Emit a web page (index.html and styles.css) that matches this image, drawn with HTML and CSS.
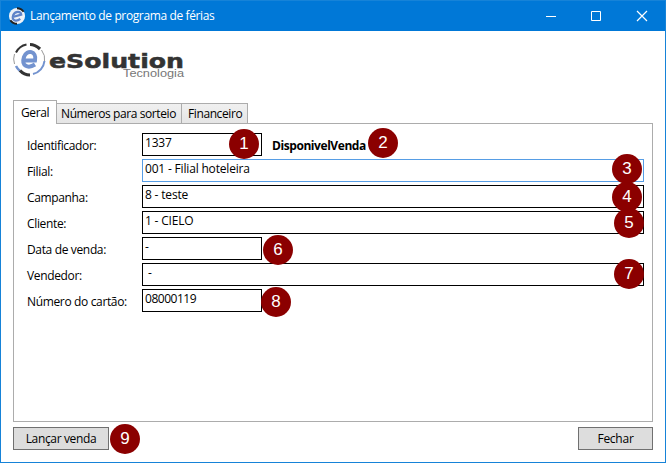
FILE: index.html
```html
<!DOCTYPE html>
<html lang="pt-BR">
<head>
<meta charset="utf-8">
<title>Lançamento de programa de férias</title>
<link rel="stylesheet" href="styles.css">
</head>
<body>
<div class="window">
  <header class="titlebar">
    <svg class="app-icon" width="18" height="18" viewBox="0 0 38 38">
      <circle cx="19" cy="19" r="17" fill="#eef2f8"/>
      <path d="M19 2.5A17 17 0 0 1 33 10" fill="none" stroke="#222" stroke-width="4"/>
      <path d="M19 35.5A17 17 0 0 1 5 28" fill="none" stroke="#222" stroke-width="4"/>
      <path d="M10 21L28 16C27 8 15 8 11 17C7 28 17 32 26 25" fill="none" stroke="#5f83c8" stroke-width="4.6"/>
    </svg>
    <h1 class="title">Lançamento de programa de férias</h1>
    <svg class="controls" width="102" height="12" viewBox="0 0 102 12" fill="none" stroke="#fff">
      <path d="M0 6.5H10"/>
      <path d="M45.500 1.500h9v9h-9z"/>
      <path d="M91 1l10 10M101 1L91 11" stroke-width="1.2"/>
    </svg>
  </header>
  <main class="body">
    <svg class="logo" width="174" height="38" viewBox="0 0 174 38">
      <g fill="none">
        <path d="M17 3.500Q22 3.500 27 8" stroke="#333" stroke-width="3.200"/>
        <path d="M13.500 3.500A15 15 0 0 0 3 11.500" stroke="#333" stroke-width="2"/>
        <path d="M1.500 13A15.500 15.500 0 0 0 1.500 23" stroke="#999" stroke-width="1"/>
        <path d="M3 25A15 15 0 0 0 7 30" stroke="#7393cf" stroke-width="2.500"/>
        <path d="M7 29.500Q11 34 17 34" stroke="#333" stroke-width="3.200"/>
        <path d="M28.500 9A15 15 0 0 1 31.500 21" stroke="#999" stroke-width="1"/>
        <path d="M31.500 20A15 15 0 0 1 20 33" stroke="#7393cf" stroke-width="2"/>
        <path d="M10 19.500H22C24 10 14 8 11 16C8 25 15 28 22 23.500" stroke="#7393cf" stroke-width="4"/>
      </g>
      <text class="logo-name" x="36" y="27" textLength="135" lengthAdjust="spacingAndGlyphs">eSolution</text>
      <text class="logo-sub" x="110" y="36" textLength="61" lengthAdjust="spacingAndGlyphs">Tecnologia</text>
    </svg>
    <nav class="tabs">
      <span class="tab tab-active">Geral</span>
      <span class="tab tab-numbers">Números para sorteio</span>
      <span class="tab tab-finance">Financeiro</span>
    </nav>
    <section class="panel">
      <div class="row"><span class="label">Identificador:</span><span class="field short">1337</span><b class="status">DisponivelVenda</b></div>
      <div class="row"><span class="label">Filial:</span><span class="field focused">001 - Filial hoteleira</span></div>
      <div class="row"><span class="label">Campanha:</span><span class="field">8 - teste</span></div>
      <div class="row"><span class="label">Cliente:</span><span class="field">1 - CIELO</span></div>
      <div class="row"><span class="label">Data de venda:</span><span class="field short">-</span></div>
      <div class="row"><span class="label">Vendedor:</span><span class="field">&nbsp;-</span></div>
      <div class="row"><span class="label">Número do cartão:</span><span class="field short card">08000119</span></div>
    </section>
    <footer class="actions">
      <button class="button launch">Lançar venda</button>
      <button class="button close">Fechar</button>
    </footer>
  </main>
  <span class="badge b1">1</span>
  <span class="badge b2">2</span>
  <span class="badge b3">3</span>
  <span class="badge b4">4</span>
  <span class="badge b5">5</span>
  <span class="badge b6">6</span>
  <span class="badge b7">7</span>
  <span class="badge b8">8</span>
  <span class="badge b9">9</span>
</div>
</body>
</html>
```
FILE: styles.css
```css
* { box-sizing: border-box; }
body { margin: 0; overflow: hidden; font: 12px/16px "Open Sans", "Noto Sans", sans-serif; letter-spacing: -0.35px; color: #000; }
.window { position: relative; display: flex; flex-direction: column; width: 666px; height: 463px; border: 1px solid #1683d8; background: #fff; }
.titlebar { display: flex; align-items: center; height: 30px; padding: 0 17px 0 7px; background: #0078d7; color: #fff; flex: none; }
.app-icon { margin-right: 4px; }
.title { margin: 0; font-size: 12px; font-weight: 400; letter-spacing: -0.38px; white-space: nowrap; }
.controls { margin-left: auto; }
.body { display: flex; flex-direction: column; flex: 1; padding: 10px 12px 12px; }
.logo { display: block; flex: none; }
.logo-name { font: bold 20px "DejaVu Sans", sans-serif; letter-spacing: 0; fill: #333; stroke: #333; stroke-width: 0.5px; }
.logo-sub { font: 11px "Liberation Sans", sans-serif; letter-spacing: 0; fill: #777; }
.tabs { display: flex; align-items: flex-end; height: 24px; margin-top: 21px; position: relative; }
.tab { height: 21px; padding: 2px 0 0 4px; border: 1px solid #acacac; border-left: 0; background: linear-gradient(#f0f0f0, #e5e5e5); letter-spacing: -0.4px; white-space: nowrap; }
.tab-active { width: 44px; height: 24px; padding: 4px 0 0 7px; border-left: 1px solid #acacac; border-bottom: 0; background: #fff; }
.tab-numbers { width: 125px; }
.tab-finance { width: 66px; padding-left: 6px; }
.panel { display: flex; flex-direction: column; gap: 3px; height: 299px; margin-top: -1px; padding: 9px 8px 0 13px; border: 1px solid #acacac; }
.row { display: flex; height: 23px; }
.label { width: 115px; padding-top: 5px; }
.field { flex: 1; height: 23px; padding: 1px 2px; border: 1px solid #000; letter-spacing: -0.18px; }
.short { flex: none; width: 120px; }
.card { letter-spacing: -0.48px; }
.focused { border-color: #569de5; }
.status { margin-left: 10px; padding-top: 5px; letter-spacing: -0.43px; }
.actions { display: flex; justify-content: space-between; margin-top: 5px; }
.button { height: 23px; padding: 0; border: 1px solid #707070; background: #ddd; font: inherit; letter-spacing: inherit; color: #000; }
.launch { width: 96px; }
.close { width: 75px; letter-spacing: -0.25px; }
.badge { position: absolute; width: 30px; height: 30px; border-radius: 50%; background: #8b0000; color: #fff; font: 17px/30px "Liberation Sans", sans-serif; letter-spacing: 0; text-align: center; }
.b1 { left: 228px; top: 128px; }
.b2 { left: 367px; top: 127px; }
.b3 { left: 611px; top: 153px; }
.b4 { left: 611px; top: 181px; }
.b5 { left: 613px; top: 207px; }
.b6 { left: 262px; top: 234px; }
.b7 { left: 613px; top: 258px; }
.b8 { left: 260px; top: 286px; }
.b9 { left: 109px; top: 423px; }
```
